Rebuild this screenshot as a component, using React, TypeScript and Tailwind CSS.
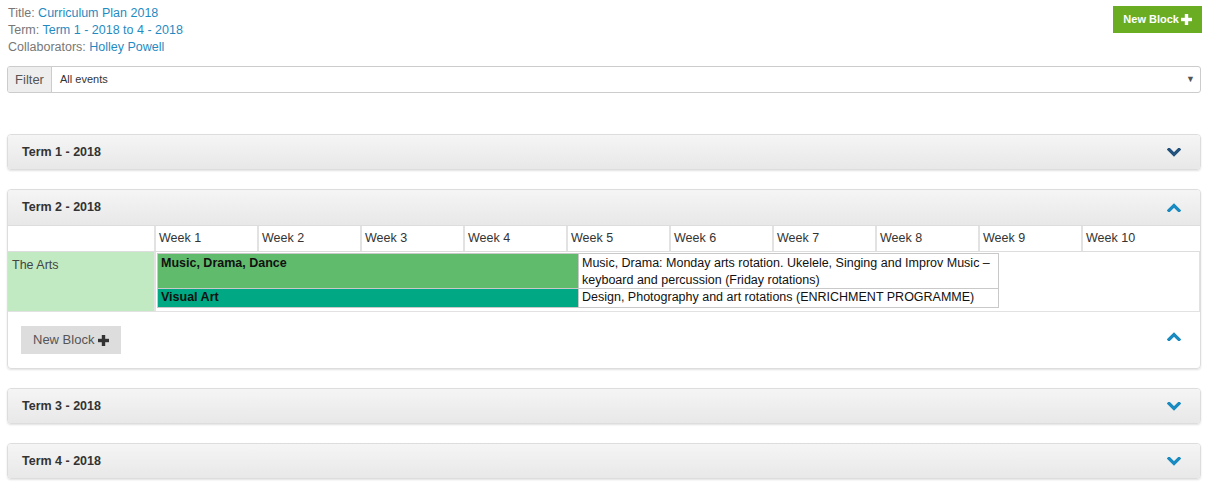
const LINK = "text-[#1f8bc2]";

const weeks = ["Week 1", "Week 2", "Week 3", "Week 4", "Week 5", "Week 6", "Week 7", "Week 8", "Week 9", "Week 10"];

function Chevron({ up, dark }: { up?: boolean; dark?: boolean }) {
  return (
    <svg width="14" height="9" viewBox="0 0 14 9" className={dark ? "text-[#23527c]" : "text-[#1a8bc0]"}>
      <polyline
        points={up ? "2,7.5 7,2.5 12,7.5" : "2,1.5 7,6.5 12,1.5"}
        fill="none"
        stroke="currentColor"
        strokeWidth="3.2"
        strokeLinecap="square"
      />
    </svg>
  );
}

function Plus({ className }: { className?: string }) {
  return (
    <svg width="11" height="11" viewBox="0 0 11 11" className={className}>
      <rect x="3.8" y="0" width="3.4" height="11" fill="currentColor" />
      <rect x="0" y="3.8" width="11" height="3.4" fill="currentColor" />
    </svg>
  );
}

function PanelHeading({ title, up, dark, open }: { title: string; up?: boolean; dark?: boolean; open?: boolean }) {
  return (
    <div
      className={`flex items-center justify-between bg-gradient-to-b from-[#f5f5f5] to-[#e8e8e8] pl-[14px] pr-[19px] ${
        open ? "h-[36px] border-b border-[#ddd]" : "h-[34px]"
      }`}
    >
      <span className="text-[12.5px] font-bold text-[#333]">{title}</span>
      <Chevron up={up} dark={dark} />
    </div>
  );
}

function ClosedTerm({ title, dark }: { title: string; dark?: boolean }) {
  return (
    <div className="overflow-hidden rounded-[4px] border border-[#ddd] shadow-[0_1px_2px_rgba(0,0,0,0.12)]">
      <PanelHeading title={title} dark={dark} />
    </div>
  );
}

export default function App() {
  return (
    <div className="min-h-[495px] bg-white pl-[7px] pr-[16px] pt-[5px] font-['Liberation_Sans',Arial,sans-serif] text-[#333]">
      <div className="flex items-start justify-between">
        <div className="pl-[1px] text-[12.5px] leading-[17px] text-[#777]">
          <div>
            Title: <span className={LINK}>Curriculum Plan 2018</span>
          </div>
          <div>
            Term: <span className={LINK}>Term 1 - 2018 to 4 - 2018</span>
          </div>
          <div>
            Collaborators: <span className={LINK}>Holley Powell</span>
          </div>
        </div>
        <button className="mt-[1px] mr-[-1px] flex h-[27px] items-center gap-[2px] bg-[#6aad22] px-[10px] text-[11px] font-bold text-white">
          New Block
          <Plus className="text-white" />
        </button>
      </div>

      <div className="mt-[10px] flex h-[27px] overflow-hidden rounded-[3px] border border-[#ccc]">
        <div className="flex w-[44px] items-center justify-center border-r border-[#ccc] bg-[#eee] text-[13px] text-[#555]">
          Filter
        </div>
        <div className="flex flex-1 items-center justify-between pl-[8px] pr-[5px] text-[11px] text-[#333]">
          <span>All events</span>
          <span className="text-[9px] text-[#555]">▼</span>
        </div>
      </div>

      <div className="mt-[41px] flex flex-col gap-[19px]">
        <ClosedTerm title="Term 1 - 2018" dark />

        <div className="overflow-hidden rounded-[4px] border border-[#ddd] shadow-[0_1px_2px_rgba(0,0,0,0.12)]">
          <PanelHeading title="Term 2 - 2018" up open />
          <div className="grid grid-cols-[146px_repeat(9,103px)_1fr] border-b border-[#ddd]">
            <div className="h-[25px]" />
            {weeks.map((w) => (
              <div key={w} className="border-l-2 border-[#e2e2e2] pl-[3px] text-[12.5px] leading-[25px] text-[#333]">
                {w}
              </div>
            ))}
          </div>
          <div className="flex h-[60px] border-b border-[#e2e2e2]">
            <div className="w-[146px] bg-[#c2eac2] px-[4px] pt-[4px] text-[12.5px] text-[#444]">The Arts</div>
            <div className="flex-1 border-l-2 border-r border-[#e2e2e2] py-[1px] pl-[1px]">
              <div className="grid w-[842px] grid-cols-[421px_1fr] border border-[#c9c9c9] text-[12.5px] leading-[17px] text-[#111]">
                <div className="h-[35px] border-b border-r border-[#c9c9c9] bg-[#61bb6d] px-[3px] pt-[1px] font-bold">
                  Music, Drama, Dance
                </div>
                <div className="h-[35px] border-b border-[#c9c9c9] px-[3px] pt-[1px]">
                  Music, Drama: Monday arts rotation. Ukelele, Singing and Improv Music – keyboard and percussion (Friday
                  rotations)
                </div>
                <div className="h-[18px] border-r border-[#c9c9c9] bg-[#00a884] px-[3px] font-bold">Visual Art</div>
                <div className="h-[18px] px-[3px]">Design, Photography and art rotations (ENRICHMENT PROGRAMME)</div>
              </div>
            </div>
          </div>
          <div className="flex h-[56px] items-start justify-between pl-[13px] pr-[19px] pt-[14px]">
            <button className="flex h-[28px] items-center gap-[4px] bg-[#ddd] px-[12px] text-[13px] text-[#555]">
              New Block
              <Plus className="text-[#333]" />
            </button>
            <div className="pt-[6px]">
              <Chevron up />
            </div>
          </div>
        </div>

        <ClosedTerm title="Term 3 - 2018" />
        <ClosedTerm title="Term 4 - 2018" />
      </div>
    </div>
  );
}
